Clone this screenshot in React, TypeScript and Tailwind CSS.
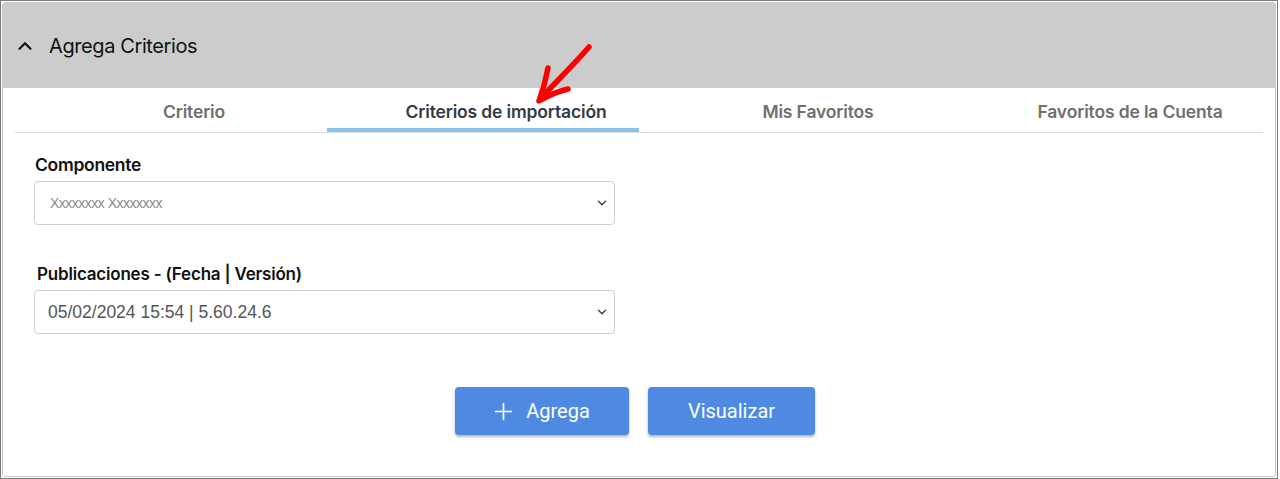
import React, { useState } from 'react';
import { ChevronUp, ChevronDown, Plus } from 'lucide-react';

const tabs = ['Criterio', 'Criterios de importación', 'Mis Favoritos', 'Favoritos de la Cuenta'];

const App: React.FC = () => {
  const [active, setActive] = useState(1);

  return (
    <div className="w-[1278px] h-[479px] bg-white border border-[#7b7b7b] p-px font-['Inter',sans-serif]">
      <div className="relative h-full border border-[#c9c9c9] rounded-[3px] bg-white overflow-hidden">
        {/* Cabecera */}
        <div className="h-[85px] bg-[#cccccc] flex items-center pl-[11px] gap-[13px]">
          <ChevronUp className="w-[22px] h-[22px] text-[#111]" strokeWidth={2.4} />
          <span className="text-[20px] tracking-[-0.4px] text-[#111]">Agrega Criterios</span>
        </div>

        {/* Pestañas */}
        <div className="mx-[12px] flex border-b border-[#dcdcdc]">
          {tabs.map((t, i) => (
            <button
              key={t}
              onClick={() => setActive(i)}
              className={`flex-1 h-[44px] pt-[9px] pl-[46px] text-center text-[17.5px] font-semibold tracking-[-0.15px] border-b-[4px] ${
                i === active ? 'text-[#343a44] border-[#88c3ec]' : 'text-[#6f6f6f] border-transparent'
              }`}
            >
              {t}
            </button>
          ))}
        </div>

        {/* Formulario */}
        <div className="pl-[31px] pt-[21px] w-[612px]">
          <label className="block text-[17.5px] font-semibold tracking-[-0.3px] text-[#111] leading-[22px] pl-px">
            Componente
          </label>
          <div className="mt-[5px] h-[44px] border border-[#cfcfcf] rounded-[4px] flex items-center justify-between pl-[15px] pr-[5px]">
            <span className="font-['Liberation_Sans_Narrow','Liberation_Sans',sans-serif] text-[14px] text-[#8a8a8a] tracking-[-0.5px]">
              Xxxxxxxx Xxxxxxxx
            </span>
            <ChevronDown className="w-[14px] h-[14px] text-[#444]" strokeWidth={2.5} />
          </div>

          <label className="block mt-[38px] text-[17px] font-semibold tracking-[-0.2px] text-[#111] leading-[22px] pl-[3px]">
            Publicaciones - (Fecha | Versión)
          </label>
          <div className="mt-[5px] h-[44px] border border-[#cfcfcf] rounded-[4px] flex items-center justify-between pl-[13px] pr-[5px]">
            <span className="font-['Liberation_Sans',Arial,sans-serif] text-[17.5px] text-[#555]">
              05/02/2024 15:54 | 5.60.24.6
            </span>
            <ChevronDown className="w-[14px] h-[14px] text-[#444]" strokeWidth={2.5} />
          </div>
        </div>

        {/* Botones */}
        <div className="mt-[53px] flex justify-center gap-[19px] pr-[8px] font-['Roboto',sans-serif]">
          <button className="w-[174px] h-[48px] rounded-[4px] bg-[#4f8ae2] text-white text-[20px] flex items-center justify-center gap-[9px] shadow-[0_2px_3px_rgba(0,0,0,0.3)]">
            <Plus className="w-[27px] h-[27px] -ml-[4px]" strokeWidth={1.5} />
            Agrega
          </button>
          <button className="w-[167px] h-[48px] rounded-[4px] bg-[#4f8ae2] text-white text-[20px] flex items-center justify-center shadow-[0_2px_3px_rgba(0,0,0,0.3)]">
            Visualizar
          </button>
        </div>

        {/* Flecha roja */}
        <svg className="absolute left-[526px] top-[34px] w-[70px] h-[70px]" viewBox="0 0 70 70" fill="none">
          <path
            d="M60 10 C 48 24, 30 42, 11 62"
            stroke="#ff0000"
            strokeWidth="5.5"
            strokeLinecap="round"
          />
          <path
            d="M19 31 C 17 42, 14 53, 10 64 C 20 58, 30 54, 39 52"
            stroke="#ff0000"
            strokeWidth="5.5"
            strokeLinecap="round"
            strokeLinejoin="round"
          />
        </svg>
      </div>
    </div>
  );
};

export default App;
